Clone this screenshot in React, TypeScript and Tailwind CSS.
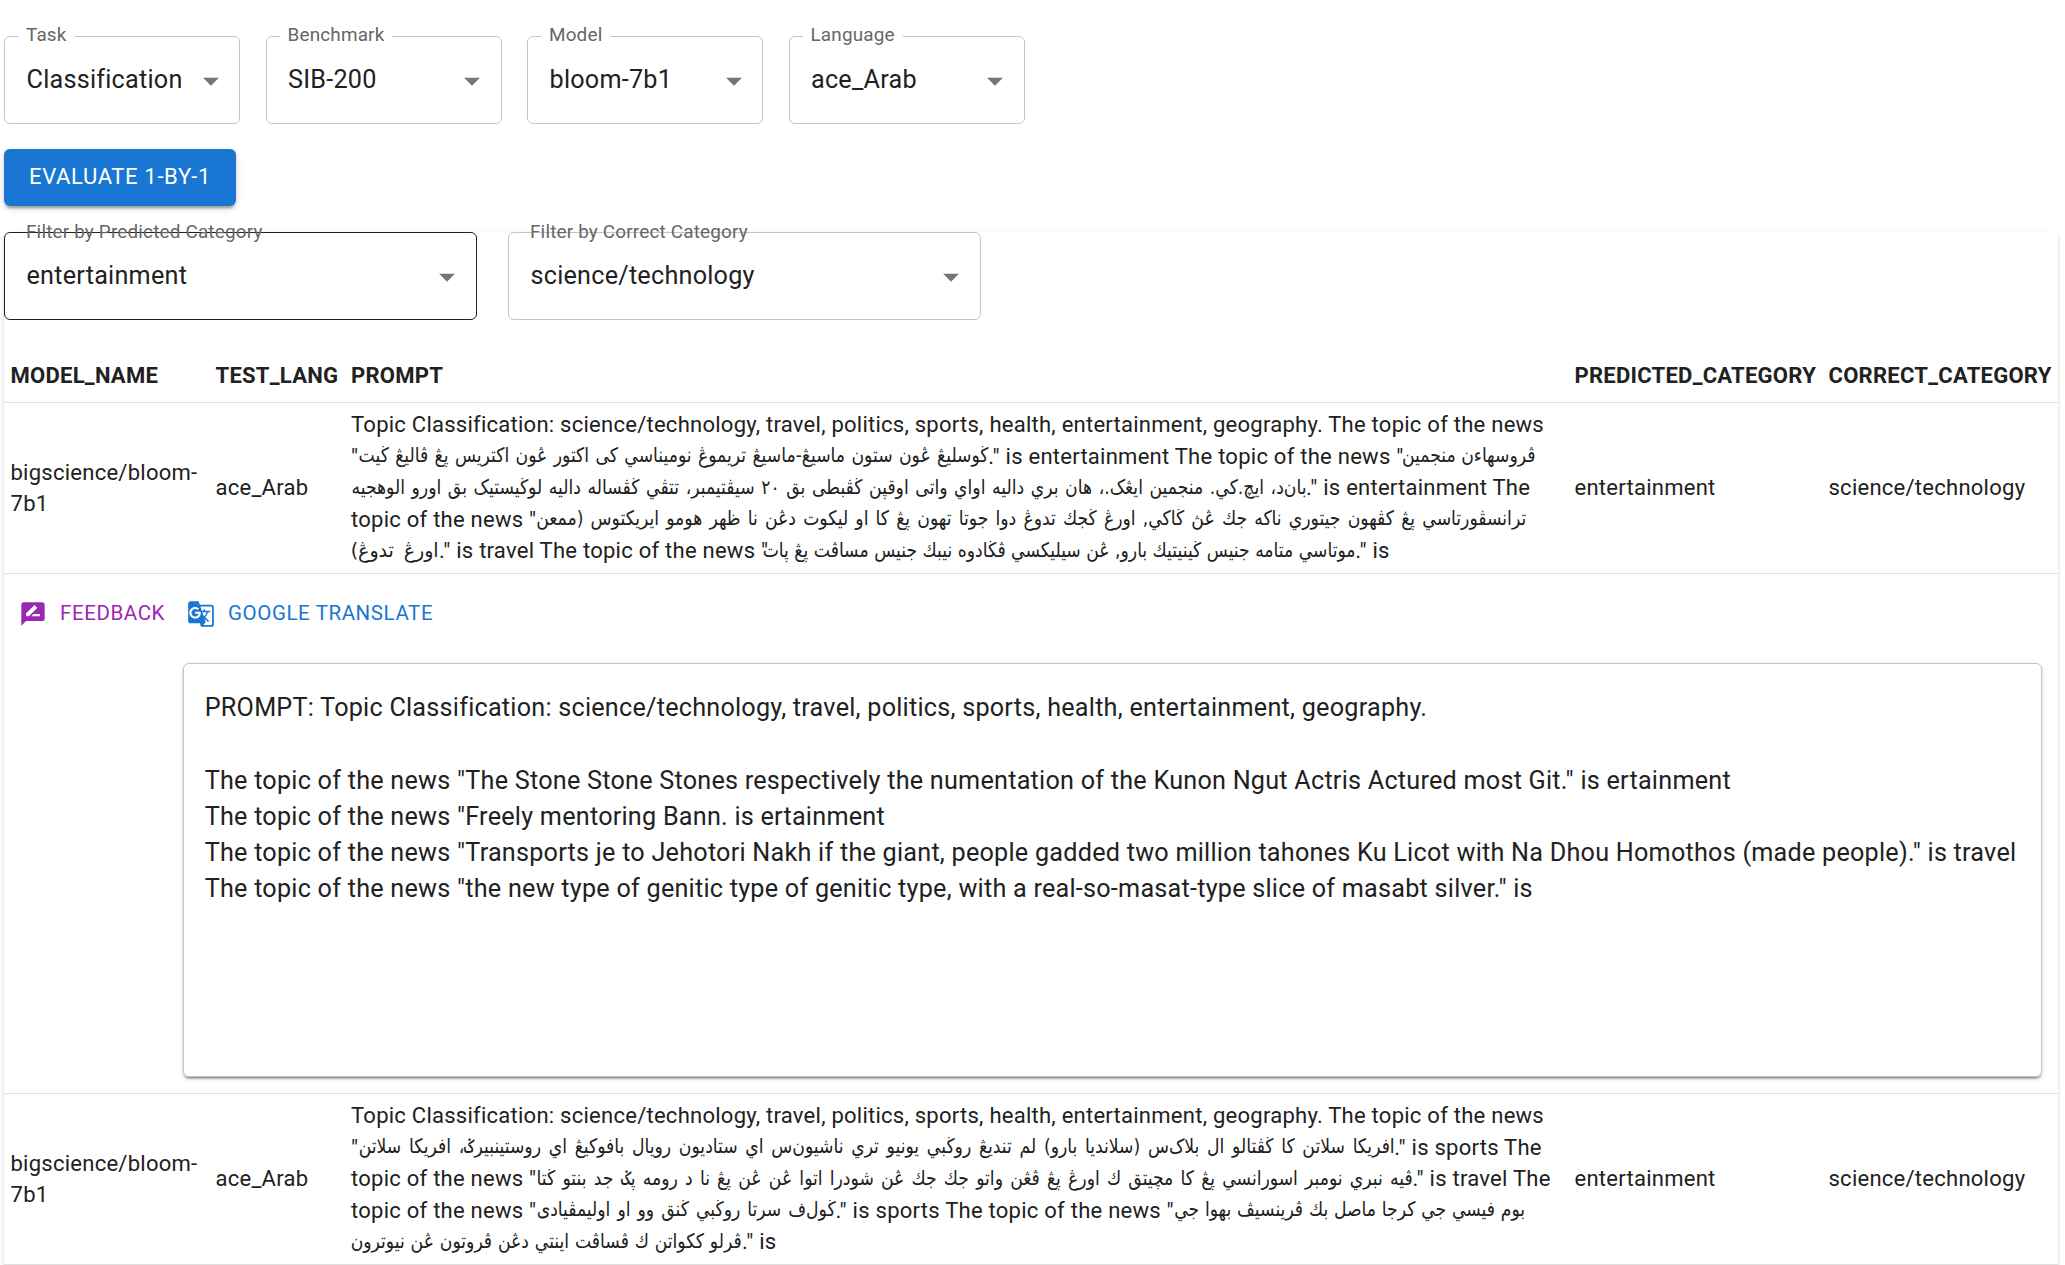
import React from "react";
import { MdArrowDropDown, MdGTranslate, MdRateReview } from "react-icons/md";

type SelectProps = {
  label: string;
  value: string;
  width: string;
  struck?: boolean;
  border?: string;
};

function Select({ label, value, width, struck = false, border = "border-[#c4c4c4]" }: SelectProps) {
  return (
    <div className={`relative flex h-[88px] items-center rounded-[6px] border pl-[21.5px] ${border} ${width}`}>
      <span
        className={`absolute left-[13px] px-[8px] text-[18.9px] leading-[28px] tracking-[0.00938em] text-[#666666] ${
          struck ? "-top-[15px]" : "-top-[16px] bg-white"
        }`}
      >
        {label}
      </span>
      <span className="text-[25.2px] leading-[36px] tracking-[0.00938em]">{value}</span>
      <MdArrowDropDown className={`absolute top-[25px] size-[38px] text-[#757575] ${struck ? "right-[10px]" : "right-[9.5px]"}`} />
    </div>
  );
}

// Right-to-left run, condensed to sit in a fixed measure and justified to fill it.
function Ar({ w, loose = false, children }: { w: string; loose?: boolean; children: string }) {
  return (
    <span className={`inline-flex h-[31px] justify-end align-bottom ${w}`}>
      <span
        dir="rtl"
        className={`block shrink-0 origin-right whitespace-nowrap text-[20px] leading-[29px] tracking-normal [font-family:'DejaVu_Sans',sans-serif] [text-align-last:justify] ${
          loose ? "w-[105.26%] scale-x-[0.95]" : "w-[116.28%] scale-x-[0.86]"
        }`}
      >
        {children}
      </span>
    </span>
  );
}

const HEAD = "Topic Classification: science/technology, travel, politics, sports, health, entertainment, geography. The topic of the news";

const cell = "px-[6.5px]";
const cols = "grid grid-cols-[205px_135.5px_1223.5px_254px_1fr]";

function Row({ children }: { children: React.ReactNode }) {
  return (
    <div className={`${cols} h-[171px] items-center border-b border-[#e0e0e0] text-[22.05px] leading-[31.5px] tracking-[0.01071em]`}>
      <div className={cell}>
        bigscience/bloom-
        <br />
        7b1
      </div>
      <div className={cell}>ace_Arab</div>
      <div className={`${cell} whitespace-nowrap`}>{children}</div>
      <div className={cell}>entertainment</div>
      <div className={cell}>science/technology</div>
    </div>
  );
}

function Line({ children }: { children: React.ReactNode }) {
  return <div className="h-[31.5px]">{children}</div>;
}

export default function App() {
  return (
    <div className="h-[1265px] w-[2065px] overflow-hidden bg-white pl-[4px] pr-[7px] pt-[36px] text-[#212121] [font-family:Roboto,sans-serif]">
      <div className="flex gap-[25.5px]">
        <Select label="Task" value="Classification" width="w-[236px]" />
        <Select label="Benchmark" value="SIB-200" width="w-[236px]" />
        <Select label="Model" value="bloom-7b1" width="w-[236px]" />
        <Select label="Language" value="ace_Arab" width="w-[236px]" />
      </div>
      <button className="mt-[25px] block h-[57px] w-[232px] rounded-[6px] bg-[#1976d2] pb-px text-[22.05px] leading-[38px] tracking-[0.02857em] text-white shadow-[0_5px_2px_-3px_rgba(0,0,0,0.2),0_3px_3px_rgba(0,0,0,0.14),0_2px_8px_rgba(0,0,0,0.12)]">
        EVALUATE 1-BY-1
      </button>
      <div className="mt-[26px] h-[1100px] rounded-[6px] shadow-[0_3px_2px_-2px_rgba(0,0,0,0.2),0_2px_2px_rgba(0,0,0,0.14),0_2px_5px_rgba(0,0,0,0.12)]">
        <div className="flex gap-[31px]">
          <Select struck label="Filter by Predicted Category" value="entertainment" width="w-[473px]" border="border-[#212121]" />
          <Select struck label="Filter by Correct Category" value="science/technology" width="w-[473px]" />
        </div>
        <div className={`${cols} mt-[32px] h-[51px] border-b border-[#e0e0e0] pt-[7px] text-[22.05px] font-bold leading-[34px] tracking-[0.01071em]`}>
          <div className={cell}>MODEL_NAME</div>
          <div className={cell}>TEST_LANG</div>
          <div className={cell}>PROMPT</div>
          <div className={cell}>PREDICTED_CATEGORY</div>
          <div className={cell}>CORRECT_CATEGORY</div>
        </div>

        <Row>
          <Line>{HEAD}</Line>
          <Line>
            "<Ar w="w-[630px]">ڬوسليڠ ڠون ستون ماسيڠ-ماسيڠ تريموڠ نوميناسي كى اكتور ڠون اكتريس پڠ ڤاليڠ ڬيت</Ar>." is
            entertainment The topic of the news "<Ar w="w-[132px]">ڤروسهاءن منجمين</Ar>
          </Line>
          <Line>
            <Ar w="w-[955px]">
              بان‌د، ايچ.كي. منجمين ايڠک.، هان بري داليه اواي واتى اوقپن ڬڤبطى بق ٢٠ سيڤتيمبر، تتڤي ڬڤساله داليه لوڬيستيک بق اورو الوهجيه
            </Ar>
            ." is entertainment The
          </Line>
          <Line>
            topic of the news "
            <Ar w="w-[990px]">
              ترانسڤورتاسي پڠ كڤهون جيتوري ناكه جك ڠڽ ڬاكي, اورڠ ڬجك تدوڠ دوا جوتا تهون پڠ كا او ليكوت دڠن نا ظهر هومو ايريكتوس (ممعن
            </Ar>
          </Line>
          <Line>
            <Ar loose w="w-[88px]">اورڠ تدوڠ)</Ar>." is travel The topic of the news "
            <Ar w="w-[587px]">موتاسي متامه جنيس ڬينيتيك بارو, ڠن سيليكسي ڤڬادوه نيبك جنيس مساڤت پڠ پات</Ar>." is
          </Line>
        </Row>

        <div className="h-[520px] border-b border-[#e0e0e0]">
          <div className="flex h-[89px] items-center pb-[10px] pl-[15px] text-[20.5px] tracking-[0.02857em]">
            <MdRateReview className="size-[28px] text-[#9c27b0]" />
            <span className="ml-[13px] text-[#9c27b0]">FEEDBACK</span>
            <MdGTranslate className="ml-[22px] size-[28px] text-[#1976d2]" />
            <span className="ml-[13px] text-[#1976d2]">GOOGLE TRANSLATE</span>
          </div>
          <div className="ml-[179px] mr-[16px] h-[414px] whitespace-nowrap rounded-[6px] border border-[#c4c4c4] pl-[20.7px] pt-[25.5px] text-[25.2px] leading-[36.04px] tracking-[0.00938em] shadow-[0_3px_2px_-2px_rgba(0,0,0,0.3),0_2px_2px_rgba(0,0,0,0.16),0_2px_5px_rgba(0,0,0,0.12)]">
            <div>PROMPT: Topic Classification: science/technology, travel, politics, sports, health, entertainment, geography.</div>
            <div className="mt-[37px]">
              The topic of the news "The Stone Stone Stones respectively the numentation of the Kunon Ngut Actris Actured most Git." is ertainment
            </div>
            <div>The topic of the news "Freely mentoring Bann. is ertainment</div>
            <div>
              The topic of the news "Transports je to Jehotori Nakh if the giant, people gadded two million tahones Ku Licot with Na Dhou Homothos (made people)." is travel
            </div>
            <div>The topic of the news "the new type of genitic type of genitic type, with a real-so-masat-type slice of masabt silver." is</div>
          </div>
        </div>

        <Row>
          <Line>{HEAD}</Line>
          <Line>
            "
            <Ar w="w-[1036px]">
              افريكا سلاتن كا ڬڤتالو ال بلاک‌س (سلانديا بارو) لم تنديڠ روڬبي يونيو تري ناشيون‌س اي ستاديون رويال بافوكيڠ اي روستينبيرݢ، افريكا سلاتن
            </Ar>
            ." is sports The
          </Line>
          <Line>
            topic of the news "
            <Ar w="w-[876px]">
              ڤيه نبري نومبر اسورانسي پڠ كا مچيتق ك اورڠ پڠ ڤڠن واتو جك جك ڠن شودرا اتوا ڠن ڠن پڠ نا د رومه پݢ جد بنتو ڬتا
            </Ar>
            ." is travel The
          </Line>
          <Line>
            topic of the news "<Ar w="w-[299px]">ڬول‌ف سرتا روڬبي ڬنق وو او اوليمڤيادى</Ar>." is sports The topic of the
            news "<Ar w="w-[351px]">بوم فيسي جي كرجا ماصل بك ڤرينسيڤ بهوا جي</Ar>
          </Line>
          <Line>
            <Ar w="w-[391px]">ڤرلو ككواتن ك ڤساڤت اينتي دڠن ڤروتون ڠن نيوترون</Ar>." is
          </Line>
        </Row>
      </div>
    </div>
  );
}
